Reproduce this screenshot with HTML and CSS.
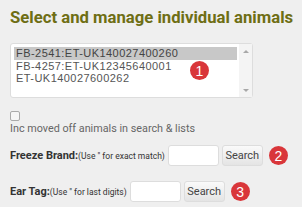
FILE: index.html
```html
<!DOCTYPE html>
<html lang="en">
<head>
    <meta charset="UTF-8">
    <title>Select animals</title>
    <link rel="stylesheet" href="styles.css">
</head>
<body>
    <div class="panel">
        <h2>Select and manage individual animals</h2>
        <div class="lista-wrap">
            <div class="lista">
                <div class="itens">
                    <div class="item sel">FB-2541:ET-UK140027400260</div>
                    <div class="item">FB-4257:ET-UK12345640001</div>
                    <div class="item">ET-UK140027600262</div>
                </div>
                <div class="scroll">
                    <span class="seta cima"></span>
                    <span class="seta baixo"></span>
                </div>
            </div>
            <span class="badge b1">1</span>
        </div>
        <div class="opcao">
            <span class="caixa"></span>
            <div class="opcao-txt">Inc moved off animals in search &amp; lists</div>
        </div>
        <div class="linha freeze">
            <b>Freeze Brand:</b><small>(Use " for exact match)</small>
            <input type="text" class="campo">
            <button class="buscar">Search</button>
            <span class="badge">2</span>
        </div>
        <div class="linha ear">
            <b>Ear Tag:</b><small>(Use " for last digits)</small>
            <input type="text" class="campo">
            <button class="buscar">Search</button>
            <span class="badge">3</span>
        </div>
    </div>
</body>
</html>
```
FILE: styles.css
```css
body { margin: 0; background: #efefef; font-family: Roboto, "Liberation Sans", sans-serif; }
.panel { padding: 0 10px; }
h2 { margin: 0; padding-top: 8px; font-size: 16.7px; font-weight: bold; color: #6e6e14; height: 43px; box-sizing: border-box; white-space: nowrap; }
.lista-wrap { position: relative; width: 243px; }
.lista { display: flex; height: 53px; background: #fff; border: 1px solid #ddd; border-radius: 3px; }
.itens { flex: 1; padding: 3px 2px 0 3px; font-family: "Liberation Sans", Arial, sans-serif; font-size: 11px; letter-spacing: 0.45px; color: #555; }
.item { height: 12.7px; line-height: 12.7px; padding-left: 2px; }
.item.sel { background: #c8c8c8; color: #444; }
.scroll { width: 13px; background: #f4f4f4; display: flex; flex-direction: column; justify-content: space-between; align-items: center; padding: 6px 0 5px; }
.seta { width: 0; height: 0; border-left: 3px solid transparent; border-right: 3px solid transparent; }
.seta.cima { border-bottom: 3px solid #a8a8a8; }
.seta.baixo { border-top: 3px solid #a8a8a8; }
.badge { display: inline-flex; align-items: center; justify-content: center; width: 19px; height: 19px; border-radius: 50%; background: #d9363a; color: #fff; font-size: 14px; font-family: "Liberation Sans", Arial, sans-serif; flex-shrink: 0; }
.b1 { position: absolute; left: 180px; top: 18px; }
.opcao { padding-top: 13px; height: 36px; box-sizing: border-box; }
.caixa { display: block; width: 8px; height: 8px; border: 1px solid #aaa; border-radius: 2px; background: #f6f6f6; }
.opcao-txt { font-size: 10.8px; color: #666; margin-top: 1px; }
.linha { display: flex; align-items: center; height: 21px; font-size: 11px; color: #333; white-space: nowrap; }
.linha b { font-weight: bold; }
.linha small { font-size: 8.5px; color: #333; margin-right: 3px; }
.freeze { margin-top: 11px; }
.ear { margin-top: 15px; }
.campo { width: 51px; height: 21px; box-sizing: border-box; border: 1px solid #ddd; border-radius: 3px; background: #fff; margin: 0; padding: 0; flex-shrink: 0; }
.buscar { height: 21px; width: 41px; margin-left: 3px; padding: 0; border: 1px solid #ddd; border-radius: 3px; background: linear-gradient(#fafafa, #e4e4e4); font-family: Roboto, sans-serif; font-size: 11px; color: #444; flex-shrink: 0; }
.linha .badge { margin-left: 6px; }
```
